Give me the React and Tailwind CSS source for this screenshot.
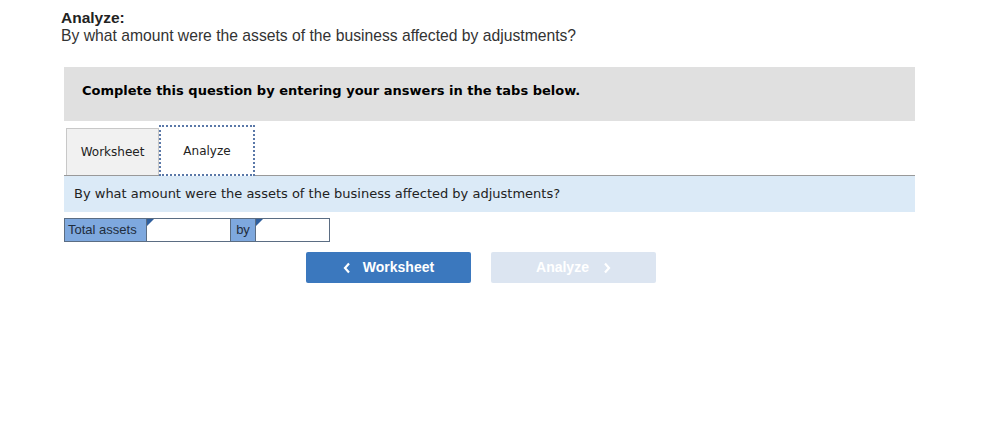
import React from 'react'

const verdana = { fontFamily: '"DejaVu Sans", Verdana, sans-serif' }
const arial = { fontFamily: '"Liberation Sans", Arial, sans-serif' }

const Flag = () => (
    <span className="absolute left-0 top-0 w-0 h-0 border-t-[7px] border-t-[#2f5f9e] border-r-[7px] border-r-transparent" />
)

const App = () => {
    return (
        <div className="w-[997px] h-[448px] bg-white relative">
            <div className="pl-[61px] pt-[9px] text-[#222]" style={arial}>
                <div className="text-[15.5px] font-bold leading-[18px]">Analyze:</div>
                <div className="text-[15.7px] leading-[18px] text-[#333]">By what amount were the assets of the business affected by adjustments?</div>
            </div>

            <div className="ml-[64px] w-[851px] mt-[22px]">
                <div className="h-[54px] bg-[#e0e0e0] pt-[14px] pl-[18px] text-[13px] font-bold text-black" style={verdana}>
                    Complete this question by entering your answers in the tabs below.
                </div>

                <div className="flex items-end h-[55px] border-b border-[#999] pl-[2px]" style={verdana}>
                    <div className="w-[93px] h-[47px] bg-[#f1f1f1] border border-b-0 border-[#c8c8c8] flex items-center justify-center text-[12px] text-[#222]">
                        Worksheet
                    </div>
                    <div className="w-[96px] h-[51px] -mb-px bg-white border-2 border-dotted border-[#5a78a8] flex items-center justify-center text-[12px] text-[#222]">
                        Analyze
                    </div>
                </div>

                <div className="h-[36px] bg-[#dbeaf7] flex items-center pl-[10px] text-[13px] text-[#222]" style={verdana}>
                    By what amount were the assets of the business affected by adjustments?
                </div>

                <div className="mt-[6px] flex h-[24px] text-[13px] text-[#1f2d3d]" style={arial}>
                    <div className="w-[83px] bg-[#7ea8de] border border-[#5b6d83] flex items-center pl-[3px]">Total assets</div>
                    <div className="relative w-[84px] bg-white border border-l-0 border-[#5b6d83]"><Flag /></div>
                    <div className="w-[25px] bg-[#7ea8de] border border-l-0 border-[#5b6d83] flex items-center justify-center">by</div>
                    <div className="relative w-[74px] bg-white border border-l-0 border-[#5b6d83]"><Flag /></div>
                </div>

                <div className="mt-[10px] flex gap-[20px] pl-[242px]" style={arial}>
                    <button className="w-[165px] h-[31px] rounded-[2px] bg-[#3b78be] text-white text-[14px] font-bold flex items-center justify-center gap-[12px]">
                        <svg width="8" height="12" viewBox="0 0 8 12"><path d="M6 1.5 L2 6 L6 10.5" fill="none" stroke="white" strokeWidth="2.2" /></svg>
                        Worksheet
                    </button>
                    <button className="w-[165px] h-[31px] rounded-[2px] bg-[#dce5f1] text-white text-[14px] font-bold flex items-center justify-center gap-[14px]">
                        Analyze
                        <svg width="8" height="12" viewBox="0 0 8 12"><path d="M2 1.5 L6 6 L2 10.5" fill="none" stroke="white" strokeWidth="2.2" /></svg>
                    </button>
                </div>
            </div>
        </div>
    )
}

export default App
